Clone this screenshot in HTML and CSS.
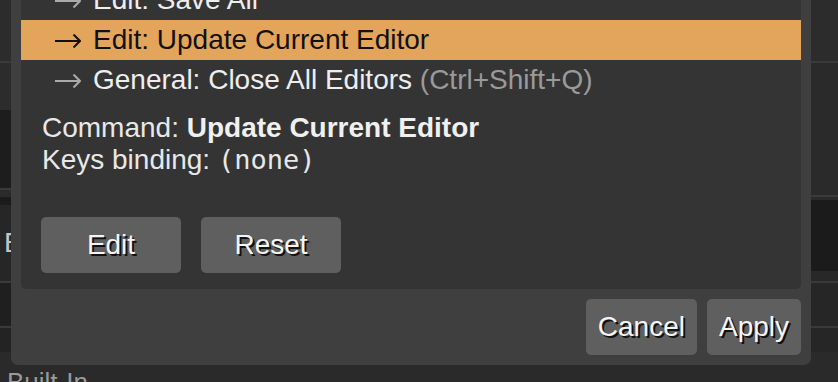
FILE: index.html
```html
<!DOCTYPE html>
<html lang="en">
<head>
    <meta charset="UTF-8">
    <title>Key Bindings</title>
    <link rel="stylesheet" href="styles.css">
</head>
<body>

    <!-- app behind the modal -->
    <div class="app">
        <div class="pane">
            <div class="band band-top"></div>
            <div class="band band-a"></div>
            <div class="band band-dark band-b"></div>
            <div class="band band-c"></div>
            <div class="band band-label">Editor</div>
            <div class="band band-d"></div>
            <div class="band band-e"></div>
            <div class="band band-foot">Built-In</div>
        </div>
        <div class="pane">
            <div class="band band-top"></div>
            <div class="band band-r1"></div>
            <div class="band band-r2"></div>
            <div class="band band-dark band-r3"></div>
            <div class="band band-r4"></div>
            <div class="band band-d"></div>
            <div class="band band-e"></div>
            <div class="band band-foot"></div>
        </div>
    </div>

    <div class="dialog">
        <div class="panel">
            <ul class="cmd-list">
                <li class="cmd">
                    <svg class="arrow" width="26" height="14" viewBox="0 0 26 14"><path d="M0 7H25M18.5 0.5L25 7L18.5 13.5"/></svg>
                    <span>Edit: Revert</span>
                </li>
                <li class="cmd">
                    <svg class="arrow" width="26" height="14" viewBox="0 0 26 14"><path d="M0 7H25M18.5 0.5L25 7L18.5 13.5"/></svg>
                    <span>Edit: Save All</span>
                </li>
                <li class="cmd selected">
                    <svg class="arrow" width="26" height="14" viewBox="0 0 26 14"><path d="M0 7H25M18.5 0.5L25 7L18.5 13.5"/></svg>
                    <span>Edit: Update Current Editor</span>
                </li>
                <li class="cmd">
                    <svg class="arrow" width="26" height="14" viewBox="0 0 26 14"><path d="M0 7H25M18.5 0.5L25 7L18.5 13.5"/></svg>
                    <span>General: Close All Editors <span class="keys">(Ctrl+Shift+Q)</span></span>
                </li>
            </ul>

            <div class="info">
                <div>Command: <b>Update Current Editor</b></div>
                <div>Keys binding: <span class="mono">(none)</span></div>
            </div>

            <div class="panel-actions">
                <button class="btn btn-wide">Edit</button>
                <button class="btn btn-wide">Reset</button>
            </div>
        </div>

        <div class="dialog-actions">
            <button class="btn">Cancel</button>
            <button class="btn">Apply</button>
        </div>
    </div>

</body>
</html>
```

FILE: styles.css
```css
html, body {
    margin: 0;
    padding: 0;
    height: 382px;
    overflow: hidden;
}

body {
    position: relative;
    font-family: 'Liberation Sans', Arial, sans-serif;
    background-color: #2a2a2a;
    color: #eee;
}

/* background app */
.app {
    display: grid;
    grid-template-columns: 1fr 1fr;
    height: 382px;
    overflow: hidden;
}

.pane {
    display: flex;
    flex-direction: column;
}

.band {
    flex: none;
    background-color: #2b2b2b;
    border-bottom: 2px solid #3a3a3a;
}

.band-top { height: 61px; background-color: #2c2c2c; }
.band-a { height: 47px; border-bottom: none; background-color: #2c2c2c; }
.band-b { height: 78px; }
.band-c { height: 7px; border-bottom: 8px solid #1b1b1b; }
.band-dark { background-color: #1d1d1d; }

.band-label {
    height: 76px;
    line-height: 76px;
    padding-left: 4px;
    font-size: 28px;
    color: #c4c4c4;
    background-color: #262626;
}

.band-d { height: 43px; background-color: #1f1f1f; }
.band-e { height: 24px; border-bottom: none; background-color: #232323; }

.band-foot {
    flex: 1;
    border-bottom: none;
    padding: 15px 0 0 7px;
    font-size: 26px;
    line-height: 30px;
    color: #9a9a9a;
    background-color: #2a2a2a;
}

.band-r1 { height: 132px; background-color: #2a2a2a; }
.band-r2 { height: 3px; border-bottom: none; background-color: #2a2a2a; }
.band-r3 { height: 71px; border-bottom: none; background-color: #1b1b1b; }
.band-r4 { height: 10px; background-color: #282828; }
.pane + .pane .band-d,
.pane + .pane .band-e { background-color: #262626; }

/* modal */
.dialog {
    position: absolute;
    left: 11px;
    bottom: 17px;
    width: 800px;
    box-sizing: border-box;
    padding: 10px;
    background-color: #3f3f3f;
    border-radius: 7px;
}

.panel {
    background-color: #343434;
    border-radius: 5px;
    padding-bottom: 16px;
}

.cmd-list {
    list-style: none;
    margin: 0;
    padding: 0;
}

.cmd {
    display: flex;
    align-items: center;
    height: 40px;
    padding-left: 34px;
    font-size: 28px;
    line-height: 40px;
    color: #eee;
    white-space: nowrap;
}

.cmd .arrow {
    flex: none;
    margin: 2px 12px 0 0;
    fill: none;
    stroke: #ababab;
    stroke-width: 2;
}

.cmd.selected {
    background-color: #e3a55c;
    color: #111;
}

.cmd.selected .arrow {
    stroke: #111;
}

.keys {
    color: #9a9a9a;
}

.info {
    margin-top: 12px;
    padding-left: 21px;
    font-size: 28px;
    line-height: 32px;
    color: #e8e8e8;
}

.info b {
    color: #f0f0f0;
}

.mono {
    font-family: 'DejaVu Sans Mono', 'Liberation Mono', monospace;
    font-size: 27px;
}

.panel-actions {
    display: flex;
    gap: 20px;
    margin-top: 41px;
    padding-left: 20px;
}

.dialog-actions {
    display: flex;
    justify-content: flex-end;
    gap: 10px;
    margin-top: 10px;
}

.btn {
    height: 56px;
    padding: 0 12px;
    border: none;
    border-radius: 5px;
    background-color: #5f5f5f;
    color: #f4f4f4;
    font-family: 'Liberation Sans', Arial, sans-serif;
    font-size: 28px;
    line-height: 56px;
    text-shadow: 2px 2px 0 #111;
}

.btn-wide {
    width: 140px;
    padding: 0;
}
```
